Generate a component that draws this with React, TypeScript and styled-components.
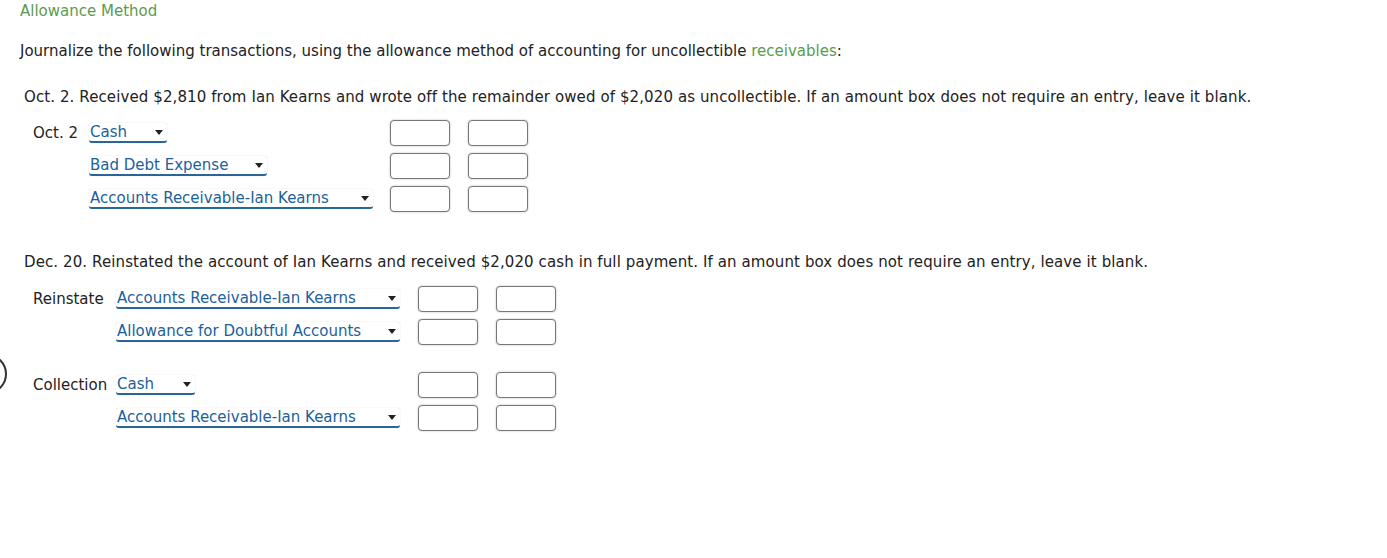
import React from 'react';
import styled, {createGlobalStyle} from 'styled-components';

const GlobalStyle = createGlobalStyle`
    body {
        margin:0;
        background:#fff;
        font-family:"DejaVu Sans", Verdana, sans-serif;
        color:#222;
    }
`

const Page = styled.div`
    position:relative;
    width:1387px;
    height:558px;
    overflow:hidden;
    padding:1px 0 0 20px;
    box-sizing:border-box;
    font-size:15px;
`

const Title = styled.div`
    color:#5b9b4f;
    margin-top:1px;
    line-height:18px;
`

const Intro = styled.p`
    margin:22px 0 0;
    line-height:18px;
    span { color:#5b9b4f; }
`

const Question = styled.p<{top:number}>`
    margin:${({top}) => top}px 0 0 4px;
    line-height:18px;
    letter-spacing:0.1px;
`

const Journal = styled.div<{labelWidth:number; top:number}>`
    display:grid;
    grid-template-columns:${({labelWidth}) => labelWidth}px auto;
    row-gap:7px;
    margin:${({top}) => top}px 0 0 13px;
    align-items:center;
`

const Label = styled.div`
    line-height:26px;
    white-space:nowrap;
`

const Line = styled.div<{selectWidth:number}>`
    display:grid;
    grid-template-columns:${({selectWidth}) => selectWidth}px 60px 60px;
    column-gap:18px;
    align-items:center;
    grid-column-start:2;
`

const Select = styled.div<{width:number}>`
    position:relative;
    width:${({width}) => width}px;
    height:20px;
    box-sizing:border-box;
    background:#fff;
    border-radius:3px;
    border-bottom:2px solid #2a6595;
    box-shadow:0 0 1px rgba(0,0,0,0.25);
    color:#1d5f9c;
    line-height:18px;
    padding-left:1px;
    white-space:nowrap;
    &::after {
        content:'';
        position:absolute;
        right:4px;
        top:7px;
        border-left:4px solid transparent;
        border-right:4px solid transparent;
        border-top:5px solid #222;
    }
`

const AmountBox = styled.div`
    width:60px;
    height:26px;
    box-sizing:border-box;
    border:1px solid #777;
    border-radius:4px;
    box-shadow:0 0 2px rgba(0,0,0,0.3);
    background:#fff;
`

const Spacer = styled.div<{h:number}>`
    grid-column:1 / 3;
    height:${({h}) => h}px;
`

const Arc = styled.div`
    position:absolute;
    left:-33px;
    top:354px;
    width:36px;
    height:36px;
    border:2.5px solid #333;
    border-radius:50%;
`

type Entry = {account:string; width:number};

const EntryLine = ({entry, selectCol}:{entry:Entry; selectCol:number}) => (
    <Line selectWidth={selectCol}>
        <div><Select width={entry.width}>{entry.account}</Select></div>
        <AmountBox/>
        <AmountBox/>
    </Line>
)

const octEntries:Entry[] = [
    {account:'Cash', width:78},
    {account:'Bad Debt Expense', width:178},
    {account:'Accounts Receivable-Ian Kearns', width:284},
]

const reinstate:Entry[] = [
    {account:'Accounts Receivable-Ian Kearns', width:284},
    {account:'Allowance for Doubtful Accounts', width:284},
]

const collection:Entry[] = [
    {account:'Cash', width:79},
    {account:'Accounts Receivable-Ian Kearns', width:284},
]

const App = () => {
    return (
        <Page>
            <GlobalStyle/>
            <Title>Allowance Method</Title>
            <Intro>Journalize the following transactions, using the allowance method of accounting for uncollectible <span>receivables</span>:</Intro>
            <Question top={28}>Oct. 2. Received $2,810 from Ian Kearns and wrote off the remainder owed of $2,020 as uncollectible. If an amount box does not require an entry, leave it blank.</Question>
            <Journal labelWidth={56} top={14}>
                {octEntries.map((e, i) => (
                    <React.Fragment key={i}>
                        <Label>{i === 0 ? 'Oct. 2' : ''}</Label>
                        <EntryLine entry={e} selectCol={283}/>
                    </React.Fragment>
                ))}
            </Journal>
            <Question top={41}>Dec. 20. Reinstated the account of Ian Kearns and received $2,020 cash in full payment. If an amount box does not require an entry, leave it blank.</Question>
            <Journal labelWidth={83} top={15}>
                {reinstate.map((e, i) => (
                    <React.Fragment key={'r' + i}>
                        <Label>{i === 0 ? 'Reinstate' : ''}</Label>
                        <EntryLine entry={e} selectCol={284}/>
                    </React.Fragment>
                ))}
                <Spacer h={13}/>
                {collection.map((e, i) => (
                    <React.Fragment key={'c' + i}>
                        <Label>{i === 0 ? 'Collection' : ''}</Label>
                        <EntryLine entry={e} selectCol={284}/>
                    </React.Fragment>
                ))}
            </Journal>
            <Arc/>
        </Page>
    )
}

export default App;
